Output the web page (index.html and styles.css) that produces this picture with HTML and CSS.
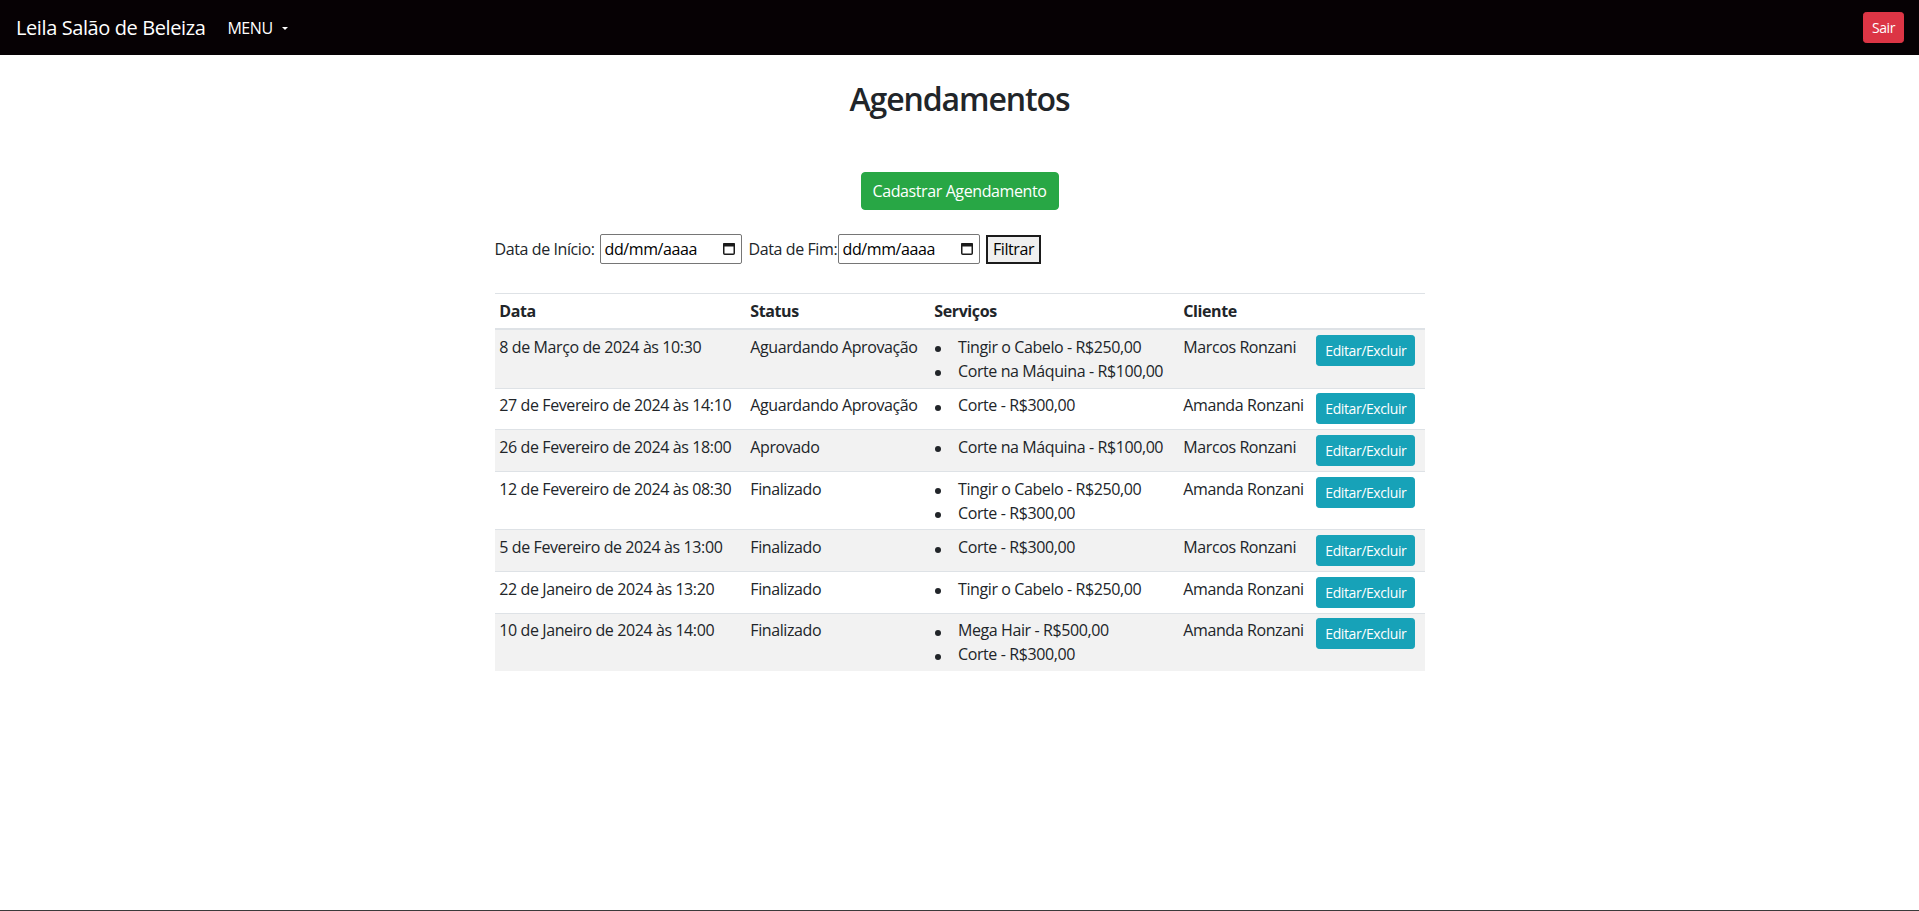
FILE: index.html
```html
<!DOCTYPE html>
<html lang="pt-BR">
<head>
<meta charset="utf-8">
<title>Agendamentos</title>
<link rel="stylesheet" href="styles.css">
</head>
<body>
<div class="page">
  <nav class="navbar">
    <span class="brand">Leila Salão de Beleiza</span>
    <span class="menu">MENU<span class="caret"></span></span>
    <span class="spacer"></span>
    <button class="btn-sair">Sair</button>
  </nav>
  <main class="main">
    <h1 class="title">Agendamentos</h1>
    <div class="actions">
      <button class="btn-add">Cadastrar Agendamento</button>
    </div>
    <div class="filter">
      <label class="lbl lbl-start">Data de Início:</label>
      <div class="date-input"><span>dd/mm/aaaa</span>
        <svg class="cal" width="12" height="12" viewBox="0 0 12 12"><rect x="0.75" y="0.75" width="10.5" height="10.5" rx="1" fill="none" stroke="#1b1b1b" stroke-width="1.5"/><rect x="0" y="0" width="12" height="3.6" rx="1" fill="#1b1b1b"/></svg>
      </div>
      <label class="lbl lbl-end">Data de Fim:</label>
      <div class="date-input"><span>dd/mm/aaaa</span>
        <svg class="cal" width="12" height="12" viewBox="0 0 12 12"><rect x="0.75" y="0.75" width="10.5" height="10.5" rx="1" fill="none" stroke="#1b1b1b" stroke-width="1.5"/><rect x="0" y="0" width="12" height="3.6" rx="1" fill="#1b1b1b"/></svg>
      </div>
      <button class="btn-filter">Filtrar</button>
    </div>
    <table class="table">
      <colgroup>
        <col class="c-data"><col class="c-status"><col class="c-serv"><col class="c-cli"><col class="c-act">
      </colgroup>
      <thead>
        <tr><th>Data</th><th>Status</th><th>Serviços</th><th>Cliente</th><th></th></tr>
      </thead>
      <tbody>
        <tr>
          <td>8 de Março de 2024 às 10:30</td>
          <td>Aguardando Aprovação</td>
          <td><ul><li>Tingir o Cabelo - R$250,00</li><li>Corte na Máquina - R$100,00</li></ul></td>
          <td>Marcos Ronzani</td>
          <td><button class="btn-edit">Editar/Excluir</button></td>
        </tr>
        <tr>
          <td>27 de Fevereiro de 2024 às 14:10</td>
          <td>Aguardando Aprovação</td>
          <td><ul><li>Corte - R$300,00</li></ul></td>
          <td>Amanda Ronzani</td>
          <td><button class="btn-edit">Editar/Excluir</button></td>
        </tr>
        <tr>
          <td>26 de Fevereiro de 2024 às 18:00</td>
          <td>Aprovado</td>
          <td><ul><li>Corte na Máquina - R$100,00</li></ul></td>
          <td>Marcos Ronzani</td>
          <td><button class="btn-edit">Editar/Excluir</button></td>
        </tr>
        <tr>
          <td>12 de Fevereiro de 2024 às 08:30</td>
          <td>Finalizado</td>
          <td><ul><li>Tingir o Cabelo - R$250,00</li><li>Corte - R$300,00</li></ul></td>
          <td>Amanda Ronzani</td>
          <td><button class="btn-edit">Editar/Excluir</button></td>
        </tr>
        <tr>
          <td>5 de Fevereiro de 2024 às 13:00</td>
          <td>Finalizado</td>
          <td><ul><li>Corte - R$300,00</li></ul></td>
          <td>Marcos Ronzani</td>
          <td><button class="btn-edit">Editar/Excluir</button></td>
        </tr>
        <tr>
          <td>22 de Janeiro de 2024 às 13:20</td>
          <td>Finalizado</td>
          <td><ul><li>Tingir o Cabelo - R$250,00</li></ul></td>
          <td>Amanda Ronzani</td>
          <td><button class="btn-edit">Editar/Excluir</button></td>
        </tr>
        <tr>
          <td>10 de Janeiro de 2024 às 14:00</td>
          <td>Finalizado</td>
          <td><ul><li>Mega Hair - R$500,00</li><li>Corte - R$300,00</li></ul></td>
          <td>Amanda Ronzani</td>
          <td><button class="btn-edit">Editar/Excluir</button></td>
        </tr>
      </tbody>
    </table>
  </main>
</div>
</body>
</html>
```
FILE: styles.css
```css
* { box-sizing: border-box; }
html, body { margin: 0; padding: 0; }
body {
  font-family: "Open Sans", "Noto Sans", sans-serif;
  font-size: 16px;
  line-height: 24px;
  color: #212529;
  letter-spacing: -0.025em;
  background: #fff;
}
button { font-family: inherit; letter-spacing: inherit; cursor: pointer; }
.page {
  min-height: 100vh;
  border-bottom: 1px solid #3a3a3a;
}
.navbar {
  height: 55px;
  background: #060104;
  display: flex;
  align-items: center;
  padding: 0 15px 0 16px;
}
.brand {
  color: #fff;
  font-size: 20px;
  line-height: 30px;
  margin-right: 22px;
}
.menu {
  color: #fff;
  font-size: 16px;
  display: flex;
  align-items: center;
}
.caret {
  width: 0;
  height: 0;
  border-left: 3px solid transparent;
  border-right: 3px solid transparent;
  border-top: 3.5px solid #fff;
  margin-left: 9px;
  margin-top: 1px;
}
.spacer { flex: 1; }
.btn-sair {
  background: #dc3545;
  color: #fff;
  border: 1px solid #dc3545;
  border-radius: 3.2px;
  font-size: 14px;
  line-height: 21px;
  padding: 4px 8px;
  height: 31px;
}
.main {
  width: 930px;
  margin: 0 auto;
  padding-top: 25px;
}
.title {
  margin: 0 0 54px;
  font-size: 32px;
  line-height: 38.4px;
  font-weight: 600;
  text-align: center;
  letter-spacing: -1.1px;
}
.actions {
  display: flex;
  justify-content: center;
}
.btn-add {
  width: 198px;
  height: 38px;
  background: #28a745;
  color: #fff;
  border: 1px solid #28a745;
  border-radius: 4px;
  font-size: 16px;
  line-height: 24px;
  padding: 6px 0;
  text-align: center;
}
.filter {
  display: flex;
  align-items: center;
  margin-top: 24px;
  height: 30px;
}
.lbl { white-space: nowrap; }
.lbl-start { width: 105px; }
.lbl-end { width: 89px; }
.date-input {
  width: 142px;
  height: 30px;
  border: 1px solid #767676;
  border-radius: 2px;
  display: flex;
  align-items: center;
  justify-content: space-between;
  padding: 0 6px 0 4px;
  margin-right: 7px;
  color: #000;
}
.cal { display: block; margin-top: -1px; }
.btn-filter {
  width: 55px;
  height: 29px;
  margin-left: -0.5px;
  background: #efefef;
  border: 2px solid #1b1b1b;
  border-radius: 0;
  font-size: 16px;
  line-height: 22px;
  padding: 0;
  color: #000;
  text-align: center;
}
.table {
  width: 930px;
  margin-top: 29px;
  border-collapse: collapse;
  table-layout: fixed;
}
.c-data { width: 251px; }
.c-status { width: 184px; }
.c-serv { width: 249px; }
.c-cli { width: 133px; }
.c-act { width: 113px; }
.table th, .table td {
  padding: 4.8px;
  border-top: 1px solid #dee2e6;
  vertical-align: top;
  text-align: left;
  white-space: nowrap;
}
.table thead th {
  border-bottom: 2px solid #dee2e6;
  vertical-align: bottom;
  font-weight: 700;
}
.table tbody tr:nth-child(odd) { background: #f2f2f2; }
.table ul {
  margin: 0;
  padding: 0;
  list-style: none;
}
.table li {
  display: flex;
  align-items: flex-start;
}
.table li::before {
  content: "";
  flex: none;
  width: 6px;
  height: 6px;
  border-radius: 50%;
  background: #212529;
  margin: 11.5px 17px 0 0.7px;
}
.btn-edit {
  display: block;
  width: 99px;
  height: 31px;
  background: #17a2b8;
  color: #fff;
  border: 1px solid #17a2b8;
  border-radius: 3.2px;
  font-size: 14px;
  line-height: 21px;
  padding: 4px 0;
  text-align: center;
}
```
